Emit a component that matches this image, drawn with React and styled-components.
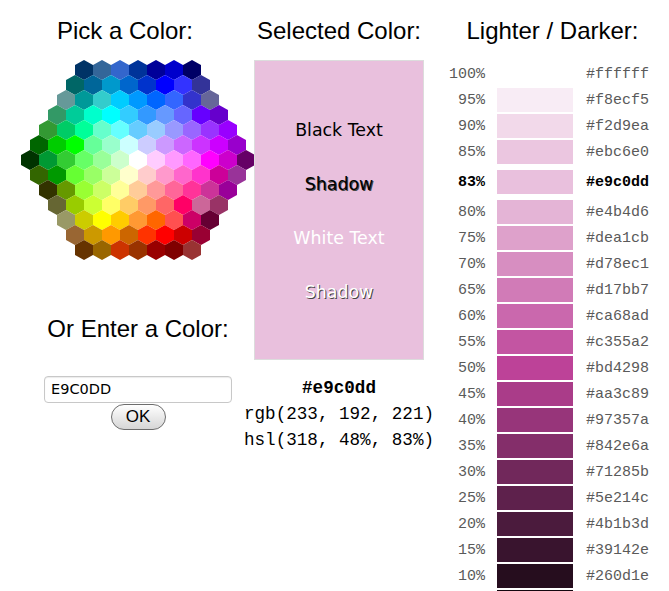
import styled, { createGlobalStyle } from "styled-components";

const GlobalStyle = createGlobalStyle`
  body {
    margin: 0;
    background: #fff;
    font-family: "Liberation Sans", Arial, sans-serif;
    color: #000;
  }
`;

const HEX_ROWS = [
  ["003366", "336699", "3366CC", "003399", "000099", "0000CC", "000066"],
  ["006666", "006699", "0099CC", "0066CC", "0033CC", "0000FF", "3333FF", "333399"],
  ["669999", "009999", "33CCCC", "00CCFF", "0099FF", "0066FF", "3366FF", "3333CC", "666699"],
  ["339966", "00CC99", "00FFCC", "00FFFF", "33CCFF", "3399FF", "6699FF", "6666FF", "6600FF", "6600CC"],
  ["339933", "00CC66", "00FF99", "66FFCC", "66FFFF", "66CCFF", "99CCFF", "9999FF", "9966FF", "9933FF", "9900FF"],
  ["006600", "00CC00", "00FF00", "66FF99", "99FFCC", "CCFFFF", "CCCCFF", "CC99FF", "CC66FF", "CC33FF", "CC00FF", "9900CC"],
  ["003300", "009933", "33CC33", "66FF66", "99FF99", "CCFFCC", "FFFFFF", "FFCCFF", "FF99FF", "FF66FF", "FF00FF", "CC00CC", "660066"],
  ["336600", "009900", "66FF33", "99FF66", "CCFF99", "FFFFCC", "FFCCCC", "FF99CC", "FF66CC", "FF33CC", "CC0099", "993399"],
  ["333300", "669900", "99FF33", "CCFF66", "FFFF99", "FFCC99", "FF9999", "FF6699", "FF3399", "CC3399", "990099"],
  ["666633", "99CC00", "CCFF33", "FFFF66", "FFCC66", "FF9966", "FF6666", "FF0066", "CC6699", "993366"],
  ["999966", "CCCC00", "FFFF00", "FFCC00", "FF9933", "FF6600", "FF5050", "CC0066", "660033"],
  ["996633", "CC9900", "FF9900", "CC6600", "FF3300", "FF0000", "CC0000", "990033"],
  ["663300", "996600", "CC3300", "993300", "990000", "800000", "993333"],
];

const SHADES = [
  ["100%", "#ffffff"],
  ["95%", "#f8ecf5"],
  ["90%", "#f2d9ea"],
  ["85%", "#ebc6e0"],
  ["83%", "#e9c0dd", true],
  ["80%", "#e4b4d6"],
  ["75%", "#dea1cb"],
  ["70%", "#d78ec1"],
  ["65%", "#d17bb7"],
  ["60%", "#ca68ad"],
  ["55%", "#c355a2"],
  ["50%", "#bd4298"],
  ["45%", "#aa3c89"],
  ["40%", "#97357a"],
  ["35%", "#842e6a"],
  ["30%", "#71285b"],
  ["25%", "#5e214c"],
  ["20%", "#4b1b3d"],
  ["15%", "#39142e"],
  ["10%", "#260d1e"],
  ["5%", "#13070f"],
  ["0%", "#000000"],
];

const Page = styled.div`
  display: flex;
  align-items: flex-start;
`;

const Column = styled.div`
  width: ${(p) => p.$width}px;
  margin-left: ${(p) => p.$offset || 0}px;
  flex-shrink: 0;
  display: flex;
  flex-direction: column;
  align-items: center;
`;

const Heading = styled.h2`
  margin: ${(p) => p.$top}px 0 0;
  font-size: 24px;
  line-height: 28px;
  font-weight: normal;
  white-space: nowrap;
`;

const PickerBody = styled.div`
  width: 238px;
  margin-left: 26px;
  display: flex;
  flex-direction: column;
  align-items: center;
`;

const HexMap = styled.svg`
  display: block;
  margin-top: 15px;
`;

const EntryHeading = styled(Heading)`
  margin-top: 55px;
`;

const ColorInput = styled.input`
  box-sizing: border-box;
  width: 188px;
  height: 27px;
  margin-top: 13px;
  padding: 0 6px;
  border: 1px solid #c8c8c8;
  border-radius: 4px;
  font-family: "DejaVu Sans", Verdana, sans-serif;
  font-size: 14.5px;
  color: #000;
  background: #fff;
  box-shadow: inset 0 1px 1px rgba(0, 0, 0, 0.08);
`;

const OkButton = styled.button`
  width: 55px;
  height: 26px;
  margin-top: 1px;
  border: 1px solid #6d6d6d;
  border-radius: 13px;
  background: linear-gradient(#ffffff, #e8e8e8 55%, #d6d6d6);
  font-family: "Liberation Sans", Arial, sans-serif;
  font-size: 17px;
  color: #000;
  padding: 0;
`;

const Preview = styled.div`
  box-sizing: border-box;
  width: 170px;
  height: 300px;
  margin-top: 15px;
  padding-top: 42px;
  border: 1px solid #dcdcdc;
  background: ${(p) => p.$color};
  display: flex;
  flex-direction: column;
  align-items: center;
`;

const PreviewLine = styled.div`
  height: 54px;
  display: flex;
  align-items: center;
  font-family: "DejaVu Sans", Verdana, sans-serif;
  font-size: 17.4px;
  color: ${(p) => (p.$light ? "#fff" : "#000")};
  text-shadow: ${(p) => (p.$shadow ? "1px 1px 0 #444" : "none")};
`;

const Codes = styled.div`
  margin-top: 15px;
  display: flex;
  flex-direction: column;
  align-items: center;
  font-family: "Liberation Mono", "Courier New", monospace;
  font-size: 17.6px;
  line-height: 26px;
  white-space: nowrap;
`;

const Code = styled.div`
  font-weight: ${(p) => (p.$bold ? "bold" : "normal")};
`;

const ShadeList = styled.div`
  margin-top: 17px;
  align-self: stretch;
  display: flex;
  flex-direction: column;
  gap: 2px;
`;

const ShadeRow = styled.div`
  display: grid;
  grid-template-columns: 49px 76px auto;
  column-gap: 12px;
  align-items: center;
  height: 24px;
  margin: ${(p) => (p.$current ? "4px 0" : "0")};
  font-family: "Liberation Mono", "Courier New", monospace;
  font-size: 15px;
  font-weight: ${(p) => (p.$current ? "bold" : "normal")};
  color: ${(p) => (p.$current ? "#000" : "#5a5a5a")};
`;

const Percent = styled.span`
  text-align: right;
`;

const Swatch = styled.div`
  height: 24px;
  background: ${(p) => p.$color};
`;

const HexCode = styled.span`
  margin-left: 1px;
`;

function hexPoints(cx, y) {
  return [
    [cx, y],
    [cx + 9, y + 5],
    [cx + 9, y + 15],
    [cx, y + 20],
    [cx - 9, y + 15],
    [cx - 9, y + 5],
  ]
    .map((p) => p.join(","))
    .join(" ");
}

const ColorMap = () => (
  <HexMap width="234" height="200" viewBox="0 0 234 200">
    {HEX_ROWS.map((row, r) => {
      const x0 = (13 - row.length) * 9;
      return row.map((c, i) => (
        <polygon
          key={`${r}-${i}`}
          points={hexPoints(x0 + 18 * i + 9, r * 15)}
          fill={`#${c}`}
        />
      ));
    })}
  </HexMap>
);

export default function App() {
  const selected = "#e9c0dd";
  return (
    <Page>
      <GlobalStyle />
      <Column $width={250}>
        <Heading $top={17}>Pick a Color:</Heading>
        <PickerBody>
          <ColorMap />
          <EntryHeading>Or Enter a Color:</EntryHeading>
          <ColorInput type="text" defaultValue="E9C0DD" />
          <OkButton type="button">OK</OkButton>
        </PickerBody>
      </Column>

      <Column $width={178}>
        <Heading $top={17}>Selected Color:</Heading>
        <Preview $color={selected}>
          <PreviewLine>Black Text</PreviewLine>
          <PreviewLine $shadow>Shadow</PreviewLine>
          <PreviewLine $light>White Text</PreviewLine>
          <PreviewLine $light $shadow>Shadow</PreviewLine>
        </Preview>
        <Codes>
          <Code $bold>#e9c0dd</Code>
          <Code>rgb(233, 192, 221)</Code>
          <Code>hsl(318, 48%, 83%)</Code>
        </Codes>
      </Column>

      <Column $width={233} $offset={8}>
        <Heading $top={17}>Lighter / Darker:</Heading>
        <ShadeList>
          {SHADES.map(([pct, hex, current]) => (
            <ShadeRow key={pct} $current={current}>
              <Percent>{pct}</Percent>
              <Swatch $color={hex} />
              <HexCode>{hex}</HexCode>
            </ShadeRow>
          ))}
        </ShadeList>
      </Column>
    </Page>
  );
}
